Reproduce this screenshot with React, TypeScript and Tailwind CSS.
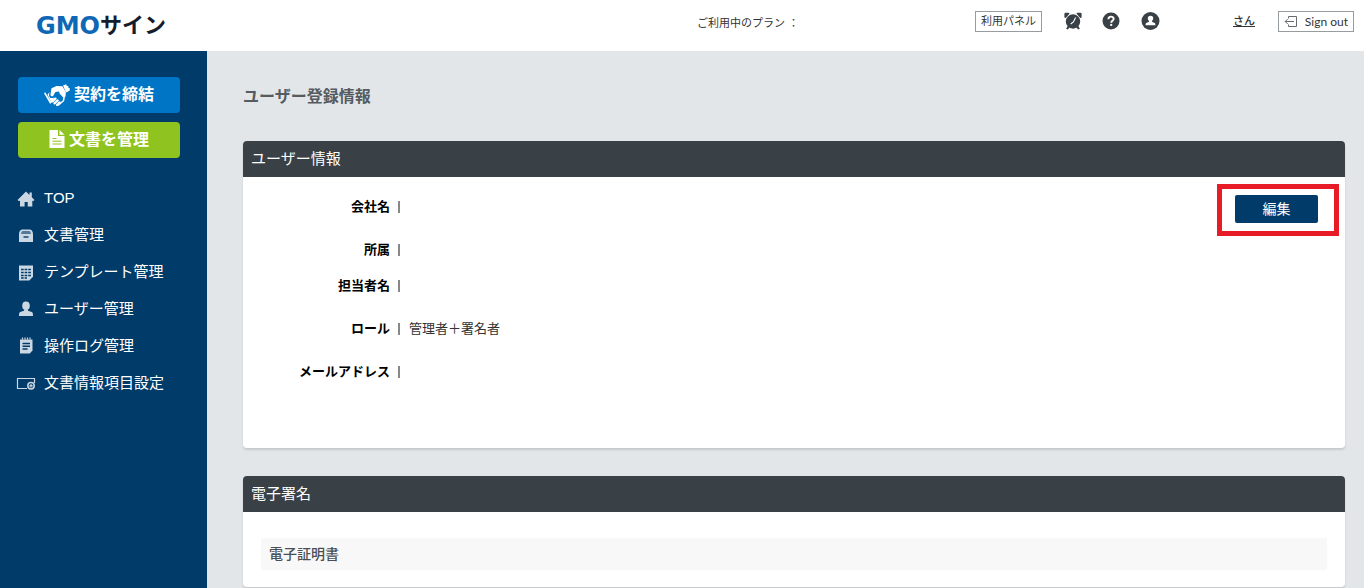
import React from 'react';

interface MenuItem {
  label: string;
  icon: React.ReactNode;
}

interface Field {
  label: string;
  value: string;
  height: string;
}

const MENU: MenuItem[] = [
  { label: 'TOP', icon: <HomeIcon /> },
  { label: '文書管理', icon: <BoxIcon /> },
  { label: 'テンプレート管理', icon: <TemplateIcon /> },
  { label: 'ユーザー管理', icon: <UserIcon /> },
  { label: '操作ログ管理', icon: <LogIcon /> },
  { label: '文書情報項目設定', icon: <FieldIcon /> },
];

const FIELDS: Field[] = [
  { label: '会社名', value: '', height: 'h-[43px]' },
  { label: '所属', value: '', height: 'h-9' },
  { label: '担当者名', value: '', height: 'h-[43px]' },
  { label: 'ロール', value: '管理者＋署名者', height: 'h-[43px]' },
  { label: 'メールアドレス', value: '', height: 'h-[43px]' },
];

export default function App() {
  return (
    <div className="min-h-screen flex flex-col bg-[#e2e6e9] text-[#333] font-['Liberation_Sans','Noto_Sans_CJK_JP',sans-serif]">
      <Header />
      <div className="flex flex-1">
        <Sidebar />
        <main className="flex-1 min-w-0 pl-9 pr-[19px] pt-[34px]">
          <h1 className="text-base leading-6 font-bold text-[#555b60] mb-8">ユーザー登録情報</h1>
          <UserInfo />
          <section className="mt-7 bg-white rounded shadow-[0_2px_2px_rgba(0,0,0,0.12)]">
            <PanelTitle>電子署名</PanelTitle>
            <div className="px-[18px] pt-[26px] pb-[17px]">
              <h3 className="bg-[#f8f8f8] h-8 px-2 flex items-center text-sm font-medium text-[#4a4f54]">電子証明書</h3>
            </div>
          </section>
        </main>
      </div>
    </div>
  );
}

function Header() {
  return (
    <header className="h-[51px] bg-white flex">
      <div className="w-1/2 pl-9 flex items-center">
        <a href="#" className="flex items-center leading-none" aria-label="GMOサイン">
          <span className="text-2xl leading-none text-[#0f67b5] font-bold font-['DejaVu_Sans',sans-serif]">GMO</span>
          <span className="text-[22px] leading-none text-[#151c2b] font-bold">サイン</span>
        </a>
      </div>
      <div className="ml-[15px] pt-[13px] text-[11px] leading-5">ご利用中のプラン ：</div>
      <div className="ml-auto mr-[10px] mt-[11px] h-[21px] flex items-center text-[11px]">
        <button className="h-[21px] w-[67px] border border-[#979ca0] whitespace-nowrap leading-none">利用パネル</button>
        <button className="ml-[22px] mb-0.5" aria-label="通知"><AlarmIcon /></button>
        <button className="ml-5 mb-0.5" aria-label="ヘルプ"><HelpIcon /></button>
        <button className="ml-[21px] mb-0.5" aria-label="アカウント"><AccountIcon /></button>
        <a href="#" className="ml-[73px] underline font-medium">さん</a>
        <button className="ml-[23px] h-[21px] w-[76px] border border-[#979ca0] flex items-center justify-between px-[5px]">
          <SignOutIcon />
          <span className="text-xs leading-none font-[Lato,sans-serif]">Sign out</span>
        </button>
      </div>
    </header>
  );
}

function Sidebar() {
  return (
    <aside className="w-[207px] shrink-0 bg-[#003b69] text-white pt-[26px]">
      <div className="pl-[18px] pr-[27px] space-y-[9px] text-base font-bold">
        <button className="w-full h-9 rounded-sm bg-[#0075c5] flex items-center justify-center gap-1">
          <HandshakeIcon />契約を締結
        </button>
        <button className="w-full h-9 rounded-sm bg-[#8fc31f] flex items-center justify-center gap-1">
          <DocumentIcon />文書を管理
        </button>
      </div>
      <nav className="mt-[22px]">
        <ul>
          {MENU.map(m => (
            <li key={m.label}>
              <a href="#" className="h-[37px] pl-4 flex items-center gap-2 text-[15px] whitespace-nowrap">
                <span className="w-5 flex justify-center text-[#cbd8e3]">{m.icon}</span>
                {m.label}
              </a>
            </li>
          ))}
        </ul>
      </nav>
    </aside>
  );
}

function PanelTitle({ children }: { children: React.ReactNode }) {
  return (
    <h2 className="h-9 px-2 flex items-center rounded-t bg-[#3a4146] text-white text-[15px]">{children}</h2>
  );
}

function UserInfo() {
  return (
    <section className="bg-white rounded shadow-[0_2px_2px_rgba(0,0,0,0.12)]">
      <PanelTitle>ユーザー情報</PanelTitle>
      <div className="flex items-start">
        <dl className="flex-1 pt-5 pb-[43px] text-[13px] leading-5">
          {FIELDS.map(f => (
            <div key={f.label} className={`flex items-start ${f.height}`}>
              <dt className="w-[147px] text-right font-bold text-black">{f.label}</dt>
              <dd className="flex items-center h-5">
                <span className="ml-[8px] mr-[9px] w-0.5 h-3 bg-[#888]" />
                {f.value}
              </dd>
            </div>
          ))}
        </dl>
        <div className="mt-[7px] mr-[6px] border-5 border-[#e81c27] pt-[6px] pb-[8px] pl-[13px] pr-4">
          <button className="block w-[83px] h-7 rounded-xs bg-[#003b69] text-white text-sm leading-none">編集</button>
        </div>
      </div>
    </section>
  );
}

function AlarmIcon() {
  return (
    <svg className="block" width="18" height="18" viewBox="0 0 18 18" fill="#394046">
      <path d="M.4 5.400V1.500L1.200.8h3.400l1 .8L1.800 6zM17.600 5.400V1.500l-.8-.7h-3.400l-1 .8L16.200 6zM3.600 14l-1.400 2.800 1.300.6 2.400-1.900zM14.400 14l1.400 2.800-1.300.6-2.400-1.900z" />
      <circle cx="9" cy="9.500" r="7.200" />
      <path d="M11.600 5.500 9.400 10 6.700 12" fill="none" stroke="#fff" strokeWidth="1.100" />
    </svg>
  );
}

function HelpIcon() {
  return (
    <svg className="block" width="18" height="18" viewBox="0 0 18 18">
      <circle cx="9" cy="9" r="8.500" fill="#394046" />
      <path d="M6.400 7.200c0-3.400 5.300-3.300 5.300-.4 0 1.900-2.500 1.900-2.500 3.900" fill="none" stroke="#fff" strokeWidth="1.900" />
      <rect x="8.200" y="11.900" width="2" height="2" fill="#fff" />
    </svg>
  );
}

function AccountIcon() {
  return (
    <svg className="block" width="19" height="18" viewBox="0 0 19 18">
      <circle cx="9.500" cy="9" r="9" fill="#394046" />
      <path d="M9.500 3.800c-2 0-2.900 1.300-2.700 3 .1 1 .6 1.800 1.200 2.300v.6l-2.700 1.200c-.5.300-.7.800-.7 2.300h9.800c0-1.500-.2-2-.7-2.300L11 9.700v-.6c.6-.5 1.100-1.300 1.200-2.300.2-1.700-.7-3-2.700-3z" fill="#fff" />
    </svg>
  );
}

function SignOutIcon() {
  return (
    <svg width="14" height="13" viewBox="0 0 14 13" fill="none" stroke="#666b70">
      <path d="M4.500 3.500v-2h8v10h-8v-2M10 6.500H1.200M3.700 4 1.200 6.500 3.700 9" />
    </svg>
  );
}

function HandshakeIcon() {
  return (
    <svg width="26" height="23" viewBox="0 0 26 23" fill="#fff">
      <path d="M19 1.400 22.300.3l.5 1.700 1.400-.1.200 1.900 1.400.5-.2 2.400-3.600 1.800z" />
      <path d="M7.500 4.200 12.600 2l5.800.3 3.400 5.800-.2 4.400-2 1-4.900-6-3.300.6-2.300 4c-1.800.8-3.200-.6-2.500-2.400z" />
      <path d="M0 9.300 1.200 8.200l6.600 10.600-1.700.9z" />
      <path d="m3.500 10.800 2-2.800-.5 3.200c.2 3 3.300 3.800 5.400 1.700l-2.200 5.200-1 .2z" />
      <path d="m8.500 17.400 3-2.800M10.500 19.400l3.200-3M13 21l2.700-2.600" fill="none" stroke="#fff" strokeWidth="2.200" strokeLinecap="round" />
      <path d="m14.500 21 5-4.300.6-3.400-4-4.300" fill="none" stroke="#fff" strokeWidth="1.500" strokeLinecap="round" />
    </svg>
  );
}

function DocumentIcon() {
  return (
    <svg className="mb-0.5" width="16" height="18" viewBox="0 0 16 18">
      <path d="M.5 0H9v6h6.500v12H.5zM10.500 0l5 4.700h-5z" fill="#fff" />
      <path d="M3.500 8.500h4M3.500 11.200h9M3.500 14h9" stroke="#8fc31f" strokeWidth="1" />
    </svg>
  );
}

function HomeIcon() {
  return (
    <svg width="18" height="16" viewBox="0 0 18 16" fill="currentColor">
      <path d="M9 .5 12.500 4V1.500h2.300v4.700L17.500 9l-1 1-1.200-.2V15.500h-4.600V11H7.600v4.500H3V9.800L1.500 10l-1-1z" />
    </svg>
  );
}

function BoxIcon() {
  return (
    <svg width="16" height="14" viewBox="0 0 16 14" fill="currentColor">
      <path d="M4 .5h8c1.800 0 3 2.200 3 4.700V13H1V5.200C1 2.700 2.200.5 4 .5z" />
      <path d="M3 5c.2-1.800 1-3 1.800-3h6.400c.8 0 1.600 1.200 1.800 3z" fill="#55799a" />
      <path d="M5.500 8h5" fill="none" stroke="#003b69" strokeWidth="1.400" />
    </svg>
  );
}

function TemplateIcon() {
  return (
    <svg width="16" height="16" viewBox="0 0 16 16" fill="currentColor">
      <path d="M1 .5h14v11.200l-3.700 3.800H1z" />
      <path d="M3 4.500h10M3 7.500h10M3 10.500h10M3 13h6" stroke="#003b69" strokeWidth="1.300" strokeDasharray="2.700 .9" />
    </svg>
  );
}

function UserIcon() {
  return (
    <svg className="mb-0.5" width="16" height="16" viewBox="0 0 16 16" fill="currentColor">
      <ellipse cx="8" cy="4.700" rx="3.800" ry="4.300" />
      <path d="M6 8.500h4v1.300l3.800 1.300c.9.400 1.200 1.200 1.200 3.900H1c0-2.700.3-3.500 1.200-3.900L6 9.800z" />
    </svg>
  );
}

function LogIcon() {
  return (
    <svg className="mb-0.5" width="16" height="17" viewBox="0 0 16 17" fill="currentColor">
      <path d="M2 2.500h12.500v11l-2.700 3H2z" />
      <path d="M4.500.5v2M7 .5v2M9.500.5v2M12 .5v2" stroke="currentColor" strokeWidth="1.200" />
      <path d="M4.500 6.500h7.500M4.500 9.200h7.500M4.500 12h5" stroke="#003b69" strokeWidth="1.400" />
    </svg>
  );
}

function FieldIcon() {
  return (
    <svg width="20" height="13" viewBox="0 0 20 13" fill="none" stroke="currentColor">
      <path d="M11 11.500H1.500v-10h17V6" strokeWidth="1.200" />
      <circle cx="15" cy="8.800" r="3.200" strokeWidth="1.500" />
      <path d="M15 7v3.600M13.200 8.800h3.600" strokeWidth="1.200" />
    </svg>
  );
}
